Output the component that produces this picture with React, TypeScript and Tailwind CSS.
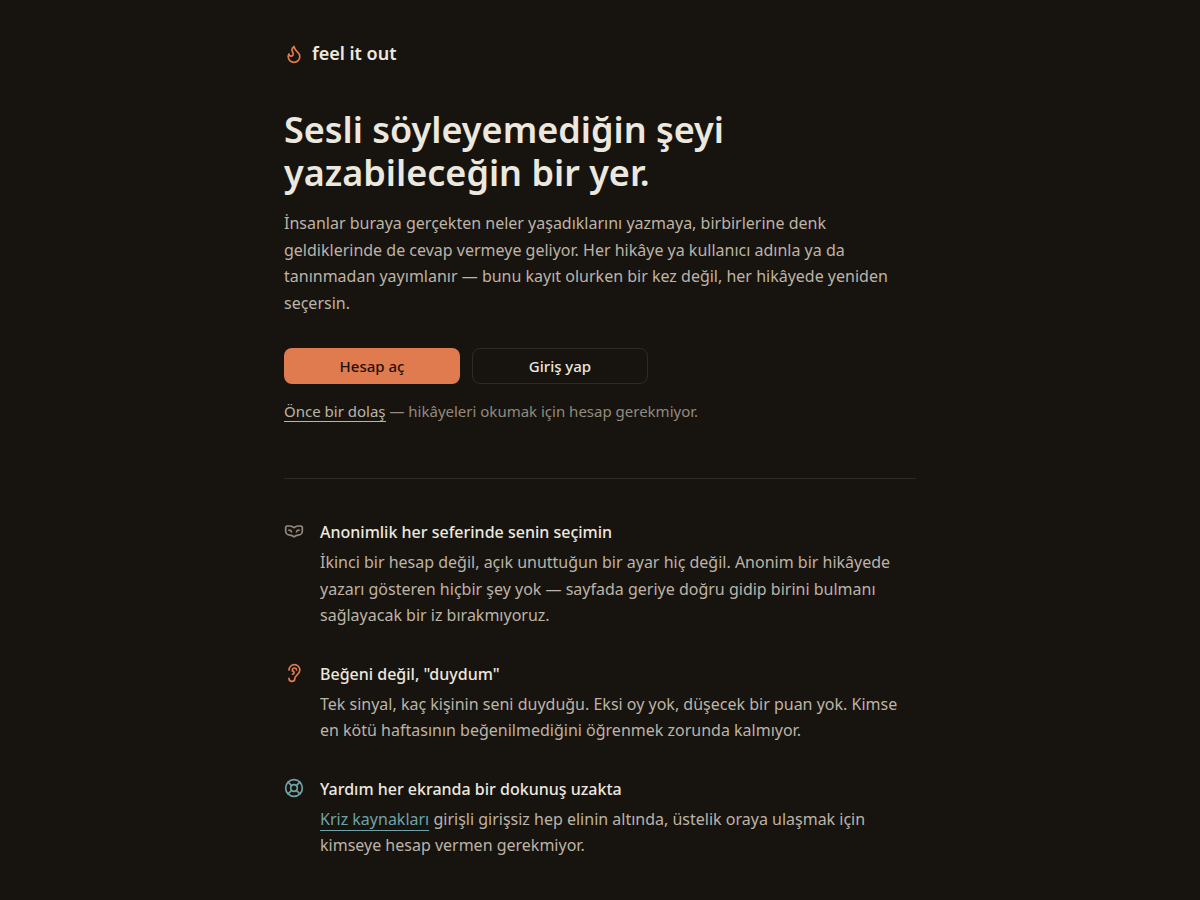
import type { ReactNode } from "react";
import { Ear, Flame, LifeBuoy, VenetianMask } from "lucide-react";

function Feature({ icon, title, children }: { icon: ReactNode; title: string; children: ReactNode }) {
  return (
    <li className="flex gap-4">
      <span className="shrink-0 pt-0.5">{icon}</span>
      <div>
        <h2 className="text-base leading-[1.65] font-medium text-[#ede8df]">{title}</h2>
        <p className="mt-1 text-base leading-[1.65] text-[#bdb3a7]">{children}</p>
      </div>
    </li>
  );
}

export default function App() {
  return (
    <div className="min-h-screen bg-[#17140f] font-['Noto_Sans',sans-serif] text-[#ede8df]">
      <main className="mx-auto max-w-[680px] px-6 pt-10 pb-10">
        <div className="flex items-center gap-2">
          <Flame size={20} strokeWidth={2} className="text-[#e07a4f]" aria-hidden="true" />
          <span className="text-lg leading-[27px] font-semibold">feel it out</span>
        </div>

        <h1 className="mt-[41px] max-w-[520px] text-4xl leading-[1.2] font-semibold">
          Sesli söyleyemediğin şeyi yazabileceğin bir yer.
        </h1>
        <p className="mt-4 text-base leading-[1.65] text-[#bdb3a7]">
          İnsanlar buraya gerçekten neler yaşadıklarını yazmaya, birbirlerine denk geldiklerinde de cevap vermeye
          geliyor. Her hikâye ya kullanıcı adınla ya da tanınmadan yayımlanır — bunu kayıt olurken bir kez değil, her
          hikâyede yeniden seçersin.
        </p>

        <div className="mt-8 flex flex-wrap gap-3">
          <button type="button" className="h-9 w-44 rounded-lg bg-[#e07a4f] text-[15px] font-medium text-[#1f1008]">
            Hesap aç
          </button>
          <button type="button" className="h-9 w-44 rounded-lg border border-[#2e2a24] text-[15px] font-medium">
            Giriş yap
          </button>
        </div>
        <p className="mt-4 text-[15px] leading-[22px] text-[#94897e]">
          <a href="#stories" className="border-b border-[#bdb3a7] text-[#bdb3a7]">
            Önce bir dolaş
          </a>{" "}
          — hikâyeleri okumak için hesap gerekmiyor.
        </p>

        <ul className="mt-14 flex flex-col gap-8 border-t border-[#2e2a24] pt-10">
          <Feature
            icon={<VenetianMask size={20} strokeWidth={2} className="text-[#94897e]" aria-hidden="true" />}
            title="Anonimlik her seferinde senin seçimin"
          >
            İkinci bir hesap değil, açık unuttuğun bir ayar hiç değil. Anonim bir hikâyede yazarı gösteren hiçbir şey
            yok — sayfada geriye doğru gidip birini bulmanı sağlayacak bir iz bırakmıyoruz.
          </Feature>
          <Feature
            icon={<Ear size={20} strokeWidth={2} className="text-[#e07a4f]" aria-hidden="true" />}
            title={'Beğeni değil, "duydum"'}
          >
            Tek sinyal, kaç kişinin seni duyduğu. Eksi oy yok, düşecek bir puan yok. Kimse en kötü haftasının
            beğenilmediğini öğrenmek zorunda kalmıyor.
          </Feature>
          <Feature
            icon={<LifeBuoy size={20} strokeWidth={2} className="text-[#6fa3a8]" aria-hidden="true" />}
            title="Yardım her ekranda bir dokunuş uzakta"
          >
            <a href="#crisis" className="border-b border-[#6fa3a8] text-[#6fa3a8]">
              Kriz kaynakları
            </a>{" "}
            girişli girişsiz hep elinin altında, üstelik oraya ulaşmak için kimseye hesap vermen gerekmiyor.
          </Feature>
        </ul>
      </main>
    </div>
  );
}
